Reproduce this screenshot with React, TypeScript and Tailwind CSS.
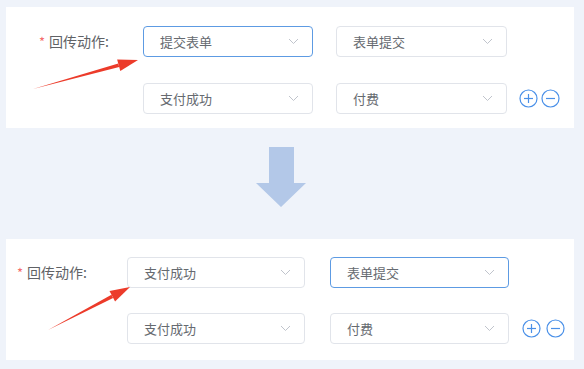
import React from "react";

const font = { fontFamily: '"Noto Sans CJK SC", "Liberation Sans", sans-serif' };

function Chevron() {
  return (
    <svg width="11" height="7" viewBox="0 0 11 7" className="shrink-0">
      <path d="M1 1 L5.5 5.5 L10 1" fill="none" stroke="#c0c4cc" strokeWidth="1" />
    </svg>
  );
}

function Select({ value, width, focused }: { value: string; width: string; focused?: boolean }) {
  return (
    <div
      className={`${width} h-[31px] flex items-center justify-between pl-[16px] pr-[13px] rounded-[4px] bg-white border ${
        focused ? "border-[#5d9be3]" : "border-[#e1e4ea]"
      }`}
    >
      <span className="text-[13px] text-[#666a70] leading-none">{value}</span>
      <Chevron />
    </div>
  );
}

function CircleBtn({ minus }: { minus?: boolean }) {
  return (
    <svg width="19" height="19" viewBox="0 0 19 19">
      <circle cx="9.5" cy="9.5" r="8.5" fill="none" stroke="#4a90e8" strokeWidth="1.2" />
      <path d="M5 9.5 H14" stroke="#4a90e8" strokeWidth="1.2" />
      {!minus && <path d="M9.5 5 V14" stroke="#4a90e8" strokeWidth="1.2" />}
    </svg>
  );
}

function RedArrow({ x1, y1, x2, y2 }: { x1: number; y1: number; x2: number; y2: number }) {
  const dx = x2 - x1;
  const dy = y2 - y1;
  const len = Math.sqrt(dx * dx + dy * dy);
  const ux = dx / len;
  const uy = dy / len;
  const px = -uy;
  const py = ux;
  const headLen = 20;
  const headW = 6;
  const bx = x2 - ux * headLen;
  const by = y2 - uy * headLen;
  const shaft = `${x1},${y1} ${bx + px * 1.8},${by + py * 1.8} ${bx - px * 1.8},${by - py * 1.8}`;
  const head = `${x2},${y2} ${bx + px * headW},${by + py * headW} ${bx - px * headW},${by - py * headW}`;
  return (
    <svg className="absolute left-0 top-0 pointer-events-none" width="584" height="140">
      <polygon points={shaft} fill="#ec3b2a" />
      <polygon points={head} fill="#ec3b2a" />
    </svg>
  );
}

function Label({ pl }: { pl: string }) {
  return (
    <div className={`${pl} flex items-center h-[31px] text-[14px] text-[#606266] whitespace-nowrap`}>
      <span className="text-[#f56c6c] mr-[4px] text-[13px]">*</span>
      回传动作:
    </div>
  );
}

export default function App() {
  return (
    <div className="w-[584px] h-[369px] bg-[#eff3fa] flex flex-col pt-[7px] relative overflow-hidden" style={font}>
      {/* before */}
      <div className="mx-[6px] w-[568px] h-[121px] bg-white relative">
        <div className="pt-[19px] flex">
          <div className="w-[137px]">
            <Label pl="pl-[33px]" />
          </div>
          <div className="flex flex-col gap-[26px]">
            <div className="flex gap-[23px]">
              <Select value="提交表单" width="w-[170px]" focused />
              <Select value="表单提交" width="w-[171px]" />
            </div>
            <div className="flex gap-[23px] items-center">
              <Select value="支付成功" width="w-[170px]" />
              <Select value="付费" width="w-[171px]" />
              <div className="flex gap-[3px] -ml-[11px]">
                <CircleBtn />
                <CircleBtn minus />
              </div>
            </div>
          </div>
        </div>
        <RedArrow x1={27} y1={82} x2={132} y2={53} />
      </div>

      {/* arrow */}
      <div className="h-[111px] flex justify-center pt-[19px] pr-[22px]">
        <svg width="50" height="60" viewBox="0 0 50 60">
          <polygon points="13,0 38,0 38,36 50,36 25,60 0,36 13,36" fill="#b3c8e8" />
        </svg>
      </div>

      {/* after */}
      <div className="mx-[6px] w-[568px] h-[121px] bg-white relative">
        <div className="pt-[18px] flex">
          <div className="w-[121px]">
            <Label pl="pl-[11px]" />
          </div>
          <div className="flex flex-col gap-[25px]">
            <div className="flex gap-[25px]">
              <Select value="支付成功" width="w-[178px]" />
              <Select value="表单提交" width="w-[179px]" focused />
            </div>
            <div className="flex gap-[25px] items-center">
              <Select value="支付成功" width="w-[178px]" />
              <Select value="付费" width="w-[179px]" />
              <div className="flex gap-[5px] -ml-[12px]">
                <CircleBtn />
                <CircleBtn minus />
              </div>
            </div>
          </div>
        </div>
        <RedArrow x1={42} y1={91} x2={124} y2={48} />
      </div>
    </div>
  );
}
